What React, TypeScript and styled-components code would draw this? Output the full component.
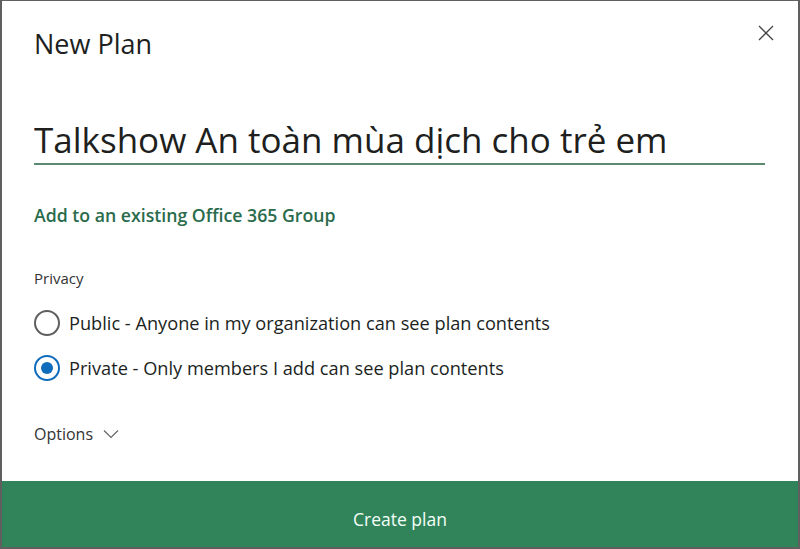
import React from 'react';
import styled, { createGlobalStyle } from 'styled-components';

const GlobalStyle = createGlobalStyle`
  html, body {
    margin: 0;
    padding: 0;
    background: #ffffff;
  }
  body {
    font-family: 'Open Sans', 'Noto Sans', 'Liberation Sans', sans-serif;
  }
`;

const App = () => {
  const [privacy, setPrivacy] = React.useState<'public' | 'private'>('private');
  const [name, setName] = React.useState('Talkshow An toàn mùa dịch cho trẻ em');

  return (
    <>
      <GlobalStyle />
      <Dialog>
        <Body>
          <Header>
            <Title>New Plan</Title>
            <CloseButton aria-label="Close">
              <svg width="16" height="16" viewBox="0 0 16 16">
                <path d="M1 1 L15 15 M15 1 L1 15" stroke="#444" strokeWidth="1.3" fill="none" />
              </svg>
            </CloseButton>
          </Header>

          <NameInput value={name} onChange={(e) => setName(e.target.value)} />

          <GroupLink>Add to an existing Office 365 Group</GroupLink>

          <SectionLabel>Privacy</SectionLabel>
          <RadioList>
            <RadioRow onClick={() => setPrivacy('public')}>
              <RadioCircle checked={privacy === 'public'} />
              <RadioText>Public - Anyone in my organization can see plan contents</RadioText>
            </RadioRow>
            <RadioRow onClick={() => setPrivacy('private')}>
              <RadioCircle checked={privacy === 'private'} />
              <RadioText>Private - Only members I add can see plan contents</RadioText>
            </RadioRow>
          </RadioList>

          <OptionsToggle>
            Options
            <svg width="16" height="10" viewBox="0 0 16 10">
              <path d="M1 1.5 L8 8.5 L15 1.5" stroke="#666" strokeWidth="1.2" fill="none" />
            </svg>
          </OptionsToggle>
        </Body>
        <Footer>Create plan</Footer>
      </Dialog>
    </>
  );
};

export default App;

const Dialog = styled.div`
  box-sizing: border-box;
  width: 800px;
  height: 549px;
  border: 2px solid #5f5f5f;
  border-top-width: 1px;
  display: flex;
  flex-direction: column;
  background: #fff;
`;

const Body = styled.div`
  flex: 1;
  padding: 0 32px;
  display: flex;
  flex-direction: column;
`;

const Header = styled.div`
  display: flex;
  align-items: center;
  justify-content: space-between;
  height: 84px;
`;

const Title = styled.h1`
  margin: 0;
  font-size: 27px;
  font-weight: 400;
  color: #201f1e;
`;

const CloseButton = styled.button`
  border: none;
  background: none;
  padding: 0;
  margin-right: -8px;
  margin-top: -20px;
  display: flex;
  cursor: pointer;
`;

const NameInput = styled.input`
  margin-top: 31px;
  width: 731px;
  box-sizing: border-box;
  border: none;
  border-bottom: 2px solid #5b8a70;
  outline: none;
  padding: 0;
  font-family: inherit;
  font-size: 35px;
  color: #201f1e;
  background: transparent;
`;

const GroupLink = styled.a`
  margin-top: 38px;
  font-size: 17.7px;
  font-weight: 600;
  color: #2a6b4c;
  cursor: pointer;
`;

const SectionLabel = styled.div`
  margin-top: 41px;
  font-size: 15px;
  color: #333;
`;

const RadioList = styled.div`
  display: flex;
  flex-direction: column;
  gap: 19px;
  margin-top: 22px;
`;

const RadioRow = styled.label`
  display: flex;
  align-items: center;
  gap: 9px;
  cursor: pointer;
`;

const RadioCircle = styled.span<{ checked: boolean }>`
  box-sizing: border-box;
  flex: none;
  width: 26px;
  height: 26px;
  border-radius: 50%;
  border: 2px solid ${(p) => (p.checked ? '#0f6cbd' : '#5f5f5f')};
  display: flex;
  align-items: center;
  justify-content: center;
  &::after {
    content: '';
    width: 12px;
    height: 12px;
    border-radius: 50%;
    background: ${(p) => (p.checked ? '#0f6cbd' : 'transparent')};
  }
`;

const RadioText = styled.span`
  font-size: 18.2px;
  color: #201f1e;
`;

const OptionsToggle = styled.div`
  margin-top: 42px;
  display: flex;
  align-items: center;
  gap: 10px;
  font-size: 16px;
  color: #333;
  cursor: pointer;
`;

const Footer = styled.button`
  height: 66px;
  border: none;
  padding: 10px 0 0 0;
  background: #31845a;
  color: #f4fff8;
  font-family: inherit;
  font-size: 17.5px;
  cursor: pointer;
`;
